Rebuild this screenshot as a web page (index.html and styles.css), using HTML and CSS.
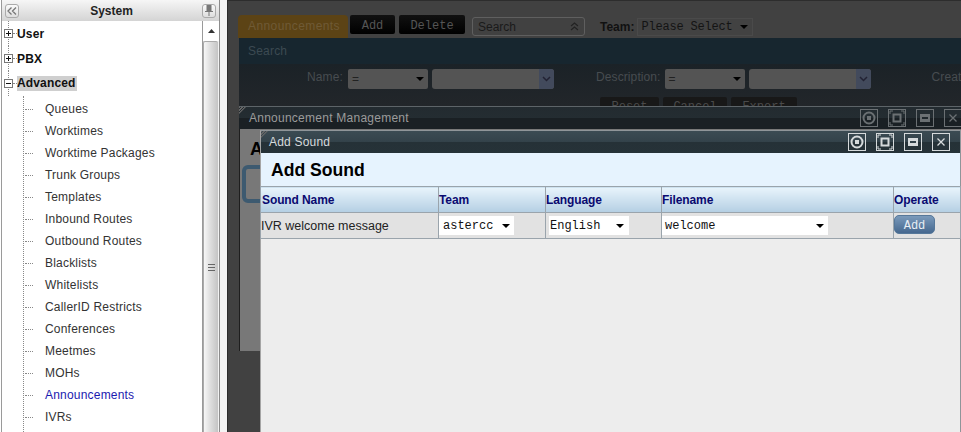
FILE: index.html
```html
<!DOCTYPE html>
<html lang="en">
<head>
<meta charset="utf-8">
<title>Add Sound</title>
<link rel="stylesheet" href="styles.css">
</head>
<body>
<div class="app">
  <aside class="side">
    <div class="panel">
      <header class="panel-head">
        <span class="tool-btn"><svg width="10" height="8" viewBox="0 0 10 8"><path d="M4.500 0.500 1 4l3.500 3.500M9 0.500 5.500 4 9 7.500" fill="none" stroke="#777" stroke-width="1.300"/></svg></span>
        <span class="panel-title">System</span>
        <span class="tool-btn"><svg width="8" height="11" viewBox="0 0 8 11"><path d="M1.500 0h5v6H8v1H4.500v4h-1V7H0V6h1.500z" fill="#777"/></svg></span>
      </header>
      <div class="panel-body">
        <nav class="tree">
          <div class="node"><svg class="tog" width="9" height="9" viewBox="0 0 9 9"><rect x=".5" y=".5" width="8" height="8" fill="#fff" stroke="#777"/><path d="M2 4.500h5M4.500 2v5" stroke="#111"/></svg><span class="dash-s"></span><b>User</b></div>
          <div class="node"><svg class="tog" width="9" height="9" viewBox="0 0 9 9"><rect x=".5" y=".5" width="8" height="8" fill="#fff" stroke="#777"/><path d="M2 4.500h5M4.500 2v5" stroke="#111"/></svg><span class="dash-s"></span><b>PBX</b></div>
          <div class="node"><svg class="tog" width="9" height="9" viewBox="0 0 9 9"><rect x=".5" y=".5" width="8" height="8" fill="#fff" stroke="#777"/><path d="M2 4.500h5" stroke="#111"/></svg><span class="dash-s"></span><b class="sel">Advanced</b></div>
          <ul class="kids">
            <li><span class="dash"></span>Queues</li>
            <li><span class="dash"></span>Worktimes</li>
            <li><span class="dash"></span>Worktime Packages</li>
            <li><span class="dash"></span>Trunk Groups</li>
            <li><span class="dash"></span>Templates</li>
            <li><span class="dash"></span>Inbound Routes</li>
            <li><span class="dash"></span>Outbound Routes</li>
            <li><span class="dash"></span>Blacklists</li>
            <li><span class="dash"></span>Whitelists</li>
            <li><span class="dash"></span>CallerID Restricts</li>
            <li><span class="dash"></span>Conferences</li>
            <li><span class="dash"></span>Meetmes</li>
            <li><span class="dash"></span>MOHs</li>
            <li class="active"><span class="dash"></span>Announcements</li>
            <li><span class="dash"></span>IVRs</li>
          </ul>
        </nav>
        <div class="scroll">
          <div class="scroll-up"><svg width="7" height="4" viewBox="0 0 7 4"><path d="M3.500 0 7 4H0z" fill="#333"/></svg></div>
          <div class="thumb"><svg width="7" height="7" viewBox="0 0 7 7"><path d="M0 .5h7M0 3.500h7M0 6.500h7" stroke="#666"/></svg></div>
        </div>
      </div>
    </div>
  </aside>

  <main class="desk">
    <div class="bar">
      <span class="tab">Announcements</span>
      <span class="dark-btn btn-add">Add</span>
      <span class="dark-btn btn-del">Delete</span>
      <span class="search-pick">Search<svg width="9" height="9" viewBox="0 0 9 9"><path d="M1 4l3.500-3L8 4M1 8l3.500-3L8 8" fill="none" stroke="#222" stroke-width="1.100"/></svg></span>
      <span class="team-label">Team:</span>
      <span class="team-pick">Please Select<i class="arrow"></i></span>
    </div>
    <div class="strip">Search</div>
    <div class="search-form">
      <div class="form-row">
        <span class="fl fl-name">Name:</span>
        <span class="dim-sel">=<i class="arrow"></i></span>
        <span class="dim-input"><i class="chev"><svg width="9" height="6" viewBox="0 0 9 6"><path d="M1 1l3.500 3.500L8 1" fill="none" stroke="#223" stroke-width="1.500"/></svg></i></span>
        <span class="fl fl-desc">Description:</span>
        <span class="dim-sel">=<i class="arrow"></i></span>
        <span class="dim-input"><i class="chev"><svg width="9" height="6" viewBox="0 0 9 6"><path d="M1 1l3.500 3.500L8 1" fill="none" stroke="#223" stroke-width="1.500"/></svg></i></span>
        <span class="fl fl-crea">Creat</span>
      </div>
      <div class="form-btns">
        <span class="form-btn fb1">Reset</span>
        <span class="form-btn fb2">Cancel</span>
        <span class="form-btn fb3">Export</span>
      </div>
    </div>

    <section class="win win-back">
      <header class="win-head">
        <span class="win-title">Announcement Management</span>
        <div class="win-tools">
          <span class="wt"><svg width="18" height="18" viewBox="0 0 18 18"><circle cx="9" cy="9" r="5.500" fill="none" stroke="currentColor" stroke-width="2"/><rect x="7" y="7" width="4" height="4" fill="currentColor"/></svg></span>
          <span class="wt"><svg width="18" height="18" viewBox="0 0 18 18"><rect x="5.500" y="5.500" width="7" height="7" fill="none" stroke="currentColor" stroke-width="2"/><path d="M2 5V2h3M13 2h3v3M16 13v3h-3M5 16H2v-3" fill="none" stroke="currentColor"/></svg></span>
          <span class="wt"><svg width="18" height="18" viewBox="0 0 18 18"><rect x="4" y="5" width="10" height="8" fill="currentColor"/><rect x="6" y="8" width="6" height="2" fill="#1f272c"/></svg></span>
          <span class="wt"><svg width="18" height="18" viewBox="0 0 18 18"><path d="M5.500 5.500l7 7M12.500 5.500l-7 7" stroke="currentColor" stroke-width="1.300"/></svg></span>
        </div>
      </header>
      <div class="back-body">
        <div class="back-letter">A</div>
        <div class="back-box"></div>
      </div>
    </section>

    <section class="win win-front">
      <header class="win-head">
        <span class="win-title">Add Sound</span>
        <div class="win-tools">
          <span class="wt"><svg width="18" height="18" viewBox="0 0 18 18"><circle cx="9" cy="9" r="5.500" fill="none" stroke="currentColor" stroke-width="2"/><rect x="7" y="7" width="4" height="4" fill="currentColor"/></svg></span>
          <span class="wt"><svg width="18" height="18" viewBox="0 0 18 18"><rect x="5.500" y="5.500" width="7" height="7" fill="none" stroke="currentColor" stroke-width="2"/><path d="M2 5V2h3M13 2h3v3M16 13v3h-3M5 16H2v-3" fill="none" stroke="currentColor"/></svg></span>
          <span class="wt"><svg width="18" height="18" viewBox="0 0 18 18"><rect x="4" y="5" width="10" height="8" fill="currentColor"/><rect x="6" y="8" width="6" height="2" fill="#33424a"/></svg></span>
          <span class="wt"><svg width="18" height="18" viewBox="0 0 18 18"><path d="M5.500 5.500l7 7M12.500 5.500l-7 7" stroke="currentColor" stroke-width="1.300"/></svg></span>
        </div>
      </header>
      <h1 class="sheet-title">Add Sound</h1>
      <table class="sound">
        <colgroup>
          <col class="c1"><col class="c2"><col class="c3"><col class="c4"><col class="c5">
        </colgroup>
        <thead>
          <tr><th>Sound Name</th><th>Team</th><th>Language</th><th>Filename</th><th>Operate</th></tr>
        </thead>
        <tbody>
          <tr>
            <td>IVR welcome message</td>
            <td><span class="pick pick-team">astercc<i class="arrow"></i></span></td>
            <td><span class="pick pick-lang">English<i class="arrow"></i></span></td>
            <td><span class="pick pick-file">welcome<i class="arrow"></i></span></td>
            <td><span class="add-btn">Add</span></td>
          </tr>
        </tbody>
      </table>
    </section>
  </main>
</div>
</body>
</html>
```

FILE: styles.css
```css
* { box-sizing: border-box; }
html, body { margin: 0; height: 100%; overflow: hidden; }
body { font-family: "Liberation Sans", Arial, sans-serif; font-size: 12px; background: #fff; }
i { font-style: normal; }

.app { display: flex; width: 961px; height: 432px; overflow: hidden; }

/* sidebar */
.side { flex: 0 0 227px; padding-right: 7px; background: #f4f4f4; border-left: 1px solid #fff; }
.panel { height: 100%; display: flex; flex-direction: column; border-left: 1px solid #9a9a9a; border-right: 1px solid #8c8c8c; }
.panel-head { flex: 0 0 21px; display: flex; align-items: center; justify-content: space-between; padding: 0 3px; background: linear-gradient(#f6f6f6, #d4d4d4); }
.tool-btn { width: 14px; height: 14px; display: flex; align-items: center; justify-content: center; border: 1px solid #aaa; border-radius: 3px; background: linear-gradient(#fafafa, #dedede); }
.panel-title { font-weight: bold; font-size: 12px; color: #222; margin-left: 2px; }
.panel-body { flex: 1; display: flex; min-height: 0; }
.tree { flex: 0 0 201px; background: #fff; border-right: 1px solid #9a9a9a; padding-left: 6px; overflow: hidden; }
.node { height: 25px; display: flex; align-items: center; color: #111; font-size: 12px; border-left: 1px dotted #888; }
.node b { font-weight: bold; letter-spacing: .15px; }
.node b.sel { background: #cfcfcf; padding: 0 1px 0 0; line-height: 15px; }
.tog { flex: none; margin-left: -5px; }
.dash-s { width: 4px; flex: none; border-top: 1px dotted #888; }
.kids { list-style: none; margin: 0 0 0 15px; padding: 2px 0 0; border-left: 1px dotted #888; height: 340px; }
.kids li { height: 22px; display: flex; align-items: center; color: #333; letter-spacing: .2px; }
.kids li.active { color: #1a1ab0; }
.dash { width: 8px; margin: 0 12px 0 1px; flex: none; border-top: 1px dotted #888; }
.scroll { flex: 1; display: flex; flex-direction: column; background: #f2f2f2; }
.scroll-up { flex: 0 0 20px; background: #fff; display: flex; align-items: center; justify-content: center; }
.thumb { flex: 1; margin-right: 1px; display: flex; align-items: center; justify-content: center; padding-top: 60px; border-top: 1px solid #aaa; border-left: 1px solid #aaa; border-radius: 2px 2px 0 0; background: linear-gradient(90deg, #f7f7f7, #dedede 45%, #c4c4c4); }

/* dimmed desktop */
.desk { position: relative; flex: 1; min-width: 0; height: 432px; overflow: hidden; background: #414141; border-left: 1px solid #2d2d2d; border-top: 1px solid #2d2d2d; }
.bar { display: flex; align-items: flex-start; height: 37px; padding: 14px 0 0 10px; }
.tab { flex: none; width: 110px; height: 23px; line-height: 23px; padding-left: 10px; border-radius: 4px 4px 0 0; background: #5c4315; color: #6f5a35; letter-spacing: .4px; }
.dark-btn { flex: none; height: 19px; margin-left: 2px; line-height: 22px; text-align: center; background: linear-gradient(#111, #000); color: #555; border-radius: 2px; font-family: "Liberation Mono", monospace; font-size: 12px; }
.btn-add { width: 45px; }
.btn-del { width: 66px; margin-left: 4px; }
.search-pick { flex: none; display: flex; align-items: center; justify-content: space-between; width: 113px; height: 19px; margin: 2px 0 0 7px; padding: 0 5px; border: 1px solid #5f5f5f; border-radius: 3px; color: #1a1a1a; }
.team-label { flex: none; margin: 5px 0 0 15px; font-weight: bold; color: #111; }
.team-pick { flex: none; display: flex; align-items: center; justify-content: space-between; width: 116px; height: 18px; margin: 3px 0 0 3px; padding: 0 4px 0 3px; border: 1px solid #4a4a4a; background: #424242; font-family: "Liberation Mono", monospace; letter-spacing: -.2px; color: #141414; }
.arrow { width: 0; height: 0; flex: none; border: 4px solid transparent; border-top: 4px solid #000; border-bottom: 0; }
.strip { height: 26px; line-height: 26px; padding-left: 9px; margin-left: 11px; background: #17262f; color: #3c4a52; letter-spacing: .2px; }
.search-form { margin-left: 11px; height: 42px; overflow: hidden; background: linear-gradient(#1b2227, #22262a); padding-top: 5px; }
.form-row { display: flex; align-items: center; height: 20px; gap: 4px; padding-left: 68px; white-space: nowrap; }
.fl { flex: none; color: #474c50; letter-spacing: .1px; margin-top: -5px; }
.fl-name { width: 37px; }
.fl-desc { margin-left: 38px; }
.fl-crea { margin-left: 57px; }
.dim-sel { flex: none; display: flex; align-items: center; justify-content: space-between; width: 80px; height: 20px; padding: 0 4px; background: #545454; color: #222; border-radius: 2px; }
.dim-input { flex: none; display: flex; justify-content: flex-end; align-items: stretch; width: 122px; height: 20px; background: #545454; border-radius: 3px; overflow: hidden; }
.chev { width: 15px; display: flex; align-items: center; justify-content: center; background: #424a5c; }
.form-btns { display: flex; gap: 4px; padding: 8px 0 0 361px; }
.form-btn { flex: none; height: 22px; line-height: 20px; text-align: center; background: #181818; color: #4a4a4a; border-radius: 2px; font-family: "Liberation Mono", monospace; }
.fb1 { width: 59px; } .fb2 { width: 64px; } .fb3 { width: 66px; }

/* windows */
.win { position: absolute; display: flex; flex-direction: column; }
.win-head { position: relative; flex: none; display: flex; align-items: center; justify-content: space-between; height: 22px; }
.win-head::before { content: ""; position: absolute; left: 0; top: 0; width: 7px; height: 7px; background: repeating-linear-gradient(135deg, #666 0 1px, transparent 1px 2px); clip-path: polygon(0 0, 100% 0, 0 100%); }
.win-title { padding-left: 10px; letter-spacing: .25px; }
.win-tools { display: flex; gap: 10px; }
.wt { width: 18px; height: 18px; border: 1px solid currentColor; display: flex; align-items: center; justify-content: center; }
.wt svg { flex: none; margin: -1px; }

.win-back { left: 11px; top: 105px; width: 735px; height: 245px; border-top: 1px solid #5d6468; }
.win-back .win-head { background: linear-gradient(#232b30, #242d32 50%, #1a2024 50%, #1a2024); color: #6b7073; }
.win-back .win-title { color: #9b9b9b; }
.win-back .win-tools { padding-right: 12px; }
.back-body { flex: 1; background: #787878; border-left: 1px solid #1e1e1e; padding: 10px 0 0 10px; overflow: hidden; }
.back-letter { font-weight: bold; font-size: 18px; color: #000; }
.back-box { width: 60px; height: 38px; margin: 5px 0 0 -8px; border: 4px solid #3d5a70; border-radius: 6px; }

.win-front { left: 32px; top: 129px; width: 701px; height: 303px; background: #ededed; border: 1px solid #8f9599; border-width: 1px 1px 0; border-left-color: #a5a5a5; }
.win-front .win-head { background: linear-gradient(#3b4b53, #33424a 50%, #253137 50%, #263238); color: #d6dadc; }
.win-front .win-title { padding: 0 0 1px 8px; letter-spacing: .2px; }
.win-front .win-tools { padding-right: 10px; }
.sheet-title { margin: 0; height: 33px; line-height: 34px; padding-left: 10px; background: #e6f3fe; font-size: 17.600px; font-weight: bold; color: #000; }
.sound { width: 700px; margin-left: -1px; border-collapse: collapse; table-layout: fixed; }
.c1 { width: 178px; } .c2 { width: 107px; } .c3 { width: 116px; } .c4 { width: 232px; } .c5 { width: 67px; }
.sound th { height: 26px; padding: 0; text-align: left; font-size: 12px; letter-spacing: -.1px; color: #0a0a70; background: linear-gradient(#e8f4fc, #b4cfe3); border: 1px solid #9aa4ac; }
.sound th:first-child { padding-left: 1px; }
.sound td { height: 26px; padding: 0; background: #e2e2e2; border: 1px solid #9aa4ac; font-size: 12.500px; color: #222; }
.pick { display: flex; align-items: center; justify-content: space-between; height: 19px; padding: 0 4px; background: #fff; font-family: "Liberation Mono", monospace; font-size: 12px; color: #111; }
.pick-team { width: 75px; }
.pick-lang { width: 80px; margin-left: 3px; padding: 0 5px 0 1px; }
.pick-file { width: 166px; padding-left: 3px; }
.add-btn { display: block; width: 41px; height: 19px; margin: -3px 0 0 0; line-height: 21px; text-align: center; border-radius: 5px; border: 1px solid #56789a; background: linear-gradient(#7a9abb, #46688f); color: #e8eef4; font-family: "Liberation Mono", monospace; font-size: 12px; }
```
